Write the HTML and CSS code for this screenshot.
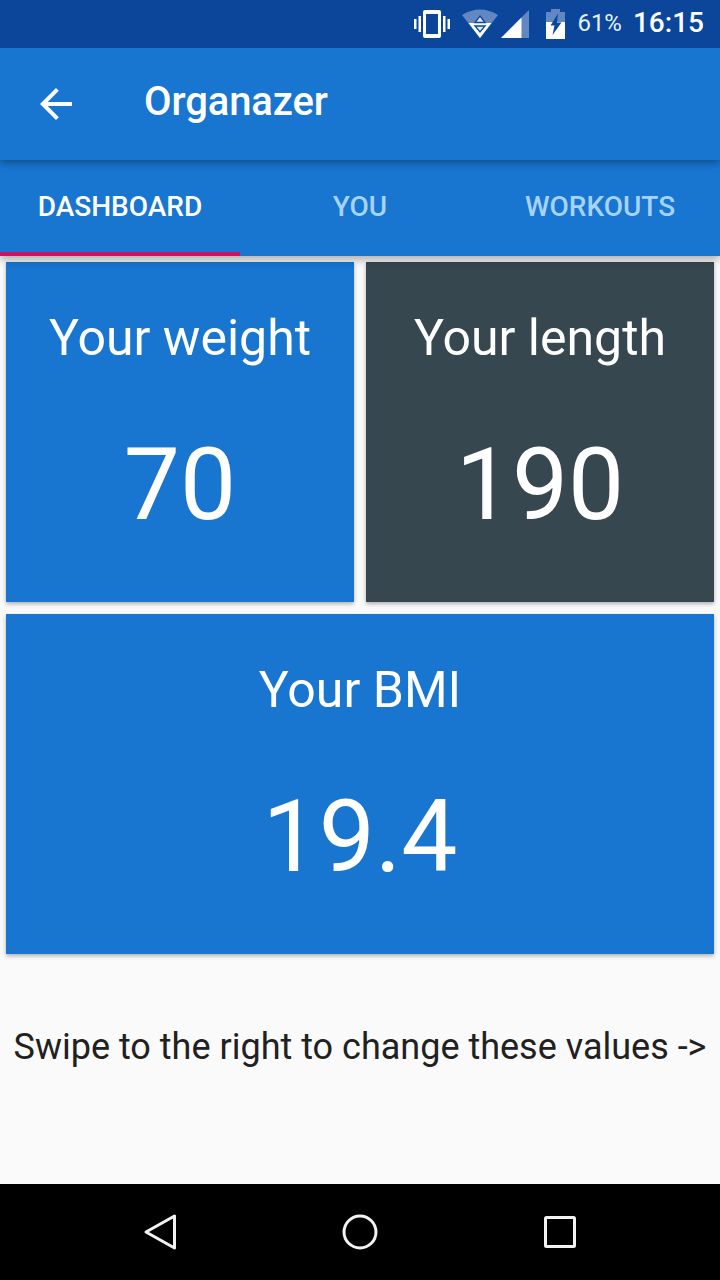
FILE: index.html
```html
<!DOCTYPE html>
<html lang="en">
<head>
    <meta charset="UTF-8">
    <meta name="viewport" content="width=device-width, initial-scale=1.0">
    <title>Organazer</title>
    <link rel="stylesheet" href="styles.css">
</head>
<body>
    <div class="status-bar">
        <svg class="status-icons" width="156" height="48" viewBox="412 0 156 48">
            <!-- vibrate -->
            <path d="M425 10h14a2 2 0 0 1 2 2v24a2 2 0 0 1-2 2h-14a2 2 0 0 1-2-2v-24a2 2 0 0 1 2-2zM426 14v20h12v-20z" fill="#fff" fill-rule="evenodd"/>
            <path d="M414 19h2.500v10h-2.500zM418.500 16h2.500v16h-2.500zM443 16h2.500v16h-2.500zM447.500 19h2.500v10h-2.500z" fill="#fff"/>
            <!-- wifi -->
            <path d="M462 15q18-11 36 0L480 38z" fill="#6287c3"/>
            <path d="M468.500 23h23L480 38z" fill="#fff"/>
            <path d="M480 16l5 6.500h-10zM475 26h10l-5 6z" fill="#dfe9f6" stroke="#0b469b" stroke-width="1.300"/>
            <!-- signal -->
            <path d="M529 10v28h-28z" fill="#6287c3"/>
            <path d="M521.500 17.500v20.500h-20.500z" fill="#fff"/>
            <!-- battery -->
            <path d="M546 12h5v-3h9v3h5v10h-19z" fill="#6287c3"/>
            <path d="M546 22h19v17h-19z" fill="#fff"/>
            <path d="M558 13.500l-7.500 12h4l-2 9.500 9-12.500h-4.500z" fill="#0b469b"/>
        </svg>
        <span class="battery-level">61%</span>
        <span class="clock">16:15</span>
    </div>

    <div class="toolbar">
        <svg class="back" width="32" height="32" viewBox="0 0 32 32">
            <path d="M32 14v4H7.660l11.180 11.180L16 32 0 16 16 0l2.820 2.820L7.660 14z" fill="#fff"/>
        </svg>
        <h1 class="title">Organazer</h1>
    </div>

    <div class="tabs">
        <div class="tab active">DASHBOARD</div>
        <div class="tab">YOU</div>
        <div class="tab">WORKOUTS</div>
    </div>

    <div class="content">
        <div class="cards">
            <div class="card">
                <div class="label">Your weight</div>
                <div class="value">70</div>
            </div>
            <div class="card dark">
                <div class="label">Your length</div>
                <div class="value">190</div>
            </div>
            <div class="card wide">
                <div class="label">Your BMI</div>
                <div class="value">19.4</div>
            </div>
        </div>
        <p class="hint">Swipe to the right to change these values -&gt;</p>
    </div>

    <div class="nav-bar">
        <svg width="40" height="40" viewBox="0 0 40 40">
            <path d="M34.500 4v32L6 20z"/>
        </svg>
        <svg width="40" height="40" viewBox="0 0 40 40">
            <circle cx="20" cy="20" r="16"/>
        </svg>
        <svg width="40" height="40" viewBox="0 0 40 40">
            <rect x="5.500" y="5.500" width="29" height="29" rx="1"/>
        </svg>
    </div>
</body>
</html>
```
FILE: styles.css
```css
* {
    box-sizing: border-box;
}
body {
    margin: 0;
    height: 1280px;
    display: flex;
    flex-direction: column;
    font-family: Roboto, sans-serif;
    background-color: #fafafa;
    color: #fff;
    overflow: hidden;
}
.status-bar {
    position: relative;
    z-index: 3;
    height: 48px;
    display: flex;
    justify-content: flex-end;
    padding-right: 16px;
    background-color: #0b469b;
    line-height: 46px;
}
.status-icons {
    margin-right: 9px;
}
.battery-level {
    font-size: 24px;
    margin-right: 11px;
    color: #e4f2ff;
}
.clock {
    font-size: 28px;
    font-weight: 500;
}
.toolbar {
    position: relative;
    z-index: 2;
    height: 112px;
    display: flex;
    align-items: center;
    padding-left: 40px;
    background-color: #1875d0;
    box-shadow: 0 2px 8px rgba(0, 0, 0, 0.4);
}
.title {
    margin: 0 0 5px 72px;
    font-size: 40px;
    font-weight: 500;
    letter-spacing: -0.1px;
}
.tabs {
    position: relative;
    z-index: 1;
    height: 96px;
    display: grid;
    grid-template-columns: repeat(3, 1fr);
    background-color: #1875d0;
    box-shadow: 0 4px 8px rgba(0, 0, 0, 0.3);
}
.tab {
    height: 96px;
    font-size: 28px;
    font-weight: 500;
    line-height: 93px;
    text-align: center;
    color: #a6d3fb;
}
.tab.active {
    color: #fff;
    border-bottom: 4px solid #cf1161;
}
.content {
    flex: 1;
}
.cards {
    display: grid;
    grid-template-columns: 1fr 1fr;
    gap: 12px;
    padding: 6px;
}
.card {
    height: 340px;
    padding-top: 46px;
    text-align: center;
    background-color: #1875d0;
    box-shadow: 0 2px 4px rgba(0, 0, 0, 0.3);
}
.card.dark {
    background-color: #37474f;
}
.card.wide {
    grid-column: span 2;
}
.label {
    font-size: 50px;
    line-height: 60px;
}
.value {
    margin-top: 57px;
    font-size: 100px;
    line-height: 120px;
}
.hint {
    margin: 62px 0 0;
    font-size: 36px;
    line-height: 50px;
    text-align: center;
    color: #212121;
    white-space: nowrap;
}
.nav-bar {
    height: 96px;
    display: flex;
    justify-content: center;
    align-items: center;
    gap: 160px;
    background-color: #000;
}
.nav-bar svg {
    fill: none;
    stroke: #f2f2f2;
    stroke-width: 3;
    stroke-linejoin: round;
}
```
